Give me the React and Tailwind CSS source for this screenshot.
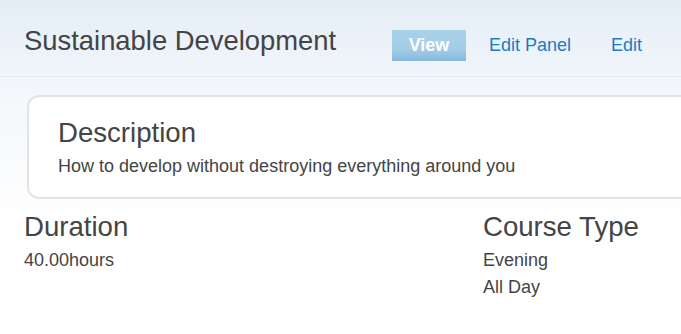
export default function App() {
  return (
    <div className="w-[681px] h-[334px] overflow-hidden bg-[linear-gradient(to_bottom,#e4edf6_0px,#f3f7fb_90px,#ffffff_230px)] font-['Liberation_Sans',Arial,sans-serif] text-[#444444]">
      <header className="flex items-start pl-[24px] pt-[26px] pb-[15px] border-b border-[#e1e8ef]">
        <h1 className="w-[368px] shrink-0 text-[27.4px] leading-[30px] font-normal text-[#444444]">
          Sustainable Development
        </h1>
        <nav className="flex items-center mt-[4px] text-[18px]">
          <span className="h-[31px] w-[74px] flex items-center justify-center bg-[linear-gradient(to_bottom,#a9d1e9_0%,#a3cde7_60%,#86bade_100%)] text-white font-bold">
            View
          </span>
          <a className="ml-[6px] h-[31px] flex items-center px-[17px] text-[#1b7cc8]">Edit Panel</a>
          <a className="ml-[6px] h-[31px] flex items-center px-[17px] text-[#1b7cc8]">Edit</a>
        </nav>
      </header>
      <section className="ml-[27px] mt-[18px] w-[720px] bg-white border-2 border-[#e3e3e3] rounded-[12px] pl-[29px] pt-[21px] pb-[17px]">
        <h2 className="text-[27.6px] leading-[30px] font-normal">Description</h2>
        <p className="mt-[5px] text-[18px] leading-[27px]">
          How to develop without destroying everything around you
        </p>
      </section>
      <div className="grid grid-cols-[459px_1fr] pl-[24px] mt-[13px]">
        <div>
          <h2 className="text-[27.6px] leading-[30px] font-normal">Duration</h2>
          <p className="mt-[5px] text-[18px] leading-[27px]">40.00hours</p>
        </div>
        <div>
          <h2 className="text-[27.6px] leading-[30px] font-normal">Course Type</h2>
          <div className="mt-[5px] text-[18px] leading-[27px]">
            <p>Evening</p>
            <p>All Day</p>
          </div>
        </div>
      </div>
    </div>
  );
}
